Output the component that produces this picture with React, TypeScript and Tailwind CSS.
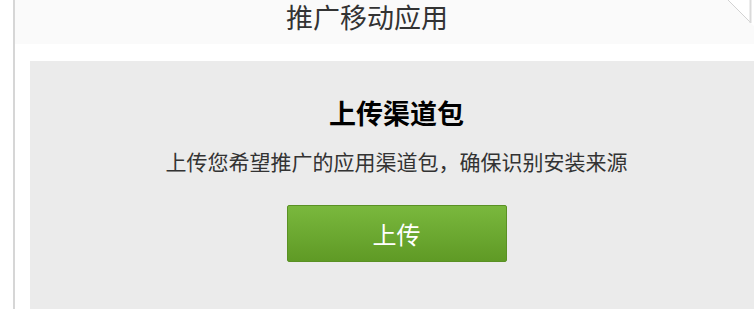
export default function App() {
  return (
    <main
      className="relative flex h-[309px] w-[754px] overflow-hidden bg-white"
      style={{ fontFamily: '"Microsoft YaHei", "Noto Sans CJK SC", "Noto Sans", sans-serif' }}
    >
      {/* left rule */}
      <div className="ml-[13px] w-[2px] shrink-0 bg-[#d6d6d6]"></div>

      <div className="flex min-w-0 flex-1 flex-col">
        {/* header */}
        <div className="h-[44px] shrink-0 bg-[#fafafa] pr-[35px] pt-[1px] text-center">
          <h2 className="text-[27px] leading-[32px] font-normal text-[#333]">推广移动应用</h2>
        </div>

        {/* upload panel */}
        <div className="ml-[15px] mt-[17px] flex w-[733px] flex-1 flex-col items-center bg-[#ebebeb] pt-[36px]">
          <h3 className="text-[27px] leading-[32px] font-bold text-black">上传渠道包</h3>
          <p className="mt-[19px] text-[21px] leading-[26px] text-[#333]">
            上传您希望推广的应用渠道包，确保识别安装来源
          </p>
          <button className="mt-[31px] flex h-[57px] w-[220px] items-center justify-center rounded-[2px] border border-[#5a9124] bg-gradient-to-b from-[#7ab83d] to-[#5f9a25] text-[24px] leading-none text-white">
            上传
          </button>
        </div>
      </div>

      {/* folded corner */}
      <svg className="absolute top-0 right-0" width="26" height="26" viewBox="0 0 26 26">
        <polygon points="0,0 26,0 26,26" fill="#ffffff" />
        <line x1="0" y1="0" x2="22" y2="22" stroke="#d2d2d2" strokeWidth="1" />
        <line x1="22.5" y1="0" x2="22.5" y2="23" stroke="#dadada" strokeWidth="2" />
      </svg>
    </main>
  );
}
